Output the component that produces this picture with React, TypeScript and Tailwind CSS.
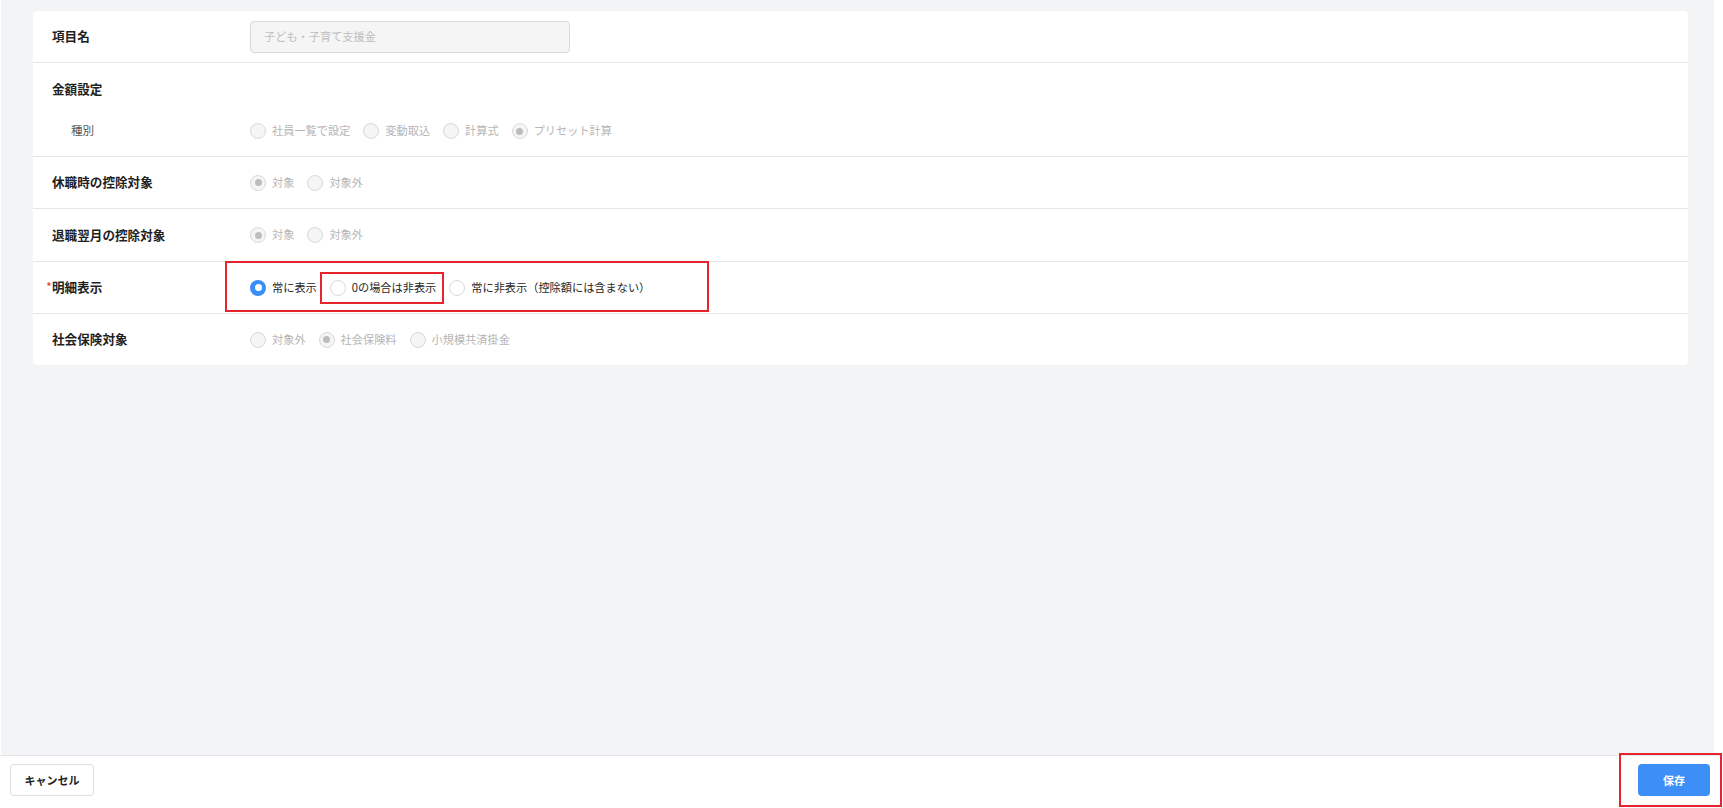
import React from "react";

type RadioProps = { label: string; checked?: boolean; disabled?: boolean };

function Radio({ label, checked = false, disabled = false }: RadioProps) {
  let circle: React.ReactNode;
  if (disabled) {
    circle = (
      <span className="w-4 h-4 rounded-full border border-[#d9d9d9] bg-[#f5f5f5] flex items-center justify-center shrink-0">
        {checked && <span className="w-[7px] h-[7px] rounded-full bg-[#bdbdbd]" />}
      </span>
    );
  } else if (checked) {
    circle = (
      <span className="w-4 h-4 rounded-full bg-[#3b8ef6] flex items-center justify-center shrink-0">
        <span className="w-[7px] h-[7px] rounded-full bg-white" />
      </span>
    );
  } else {
    circle = <span className="w-4 h-4 rounded-full border border-[#d9d9d9] bg-white shrink-0" />;
  }
  return (
    <label className="flex items-center mr-[13px]">
      {circle}
      <span
        className={
          disabled
            ? "ml-[6px] text-[11.2px] leading-none text-[#b5b5b5] whitespace-nowrap"
            : "ml-[6px] text-[11.2px] leading-none text-[#262626] whitespace-nowrap"
        }
      >
        {label}
      </span>
    </label>
  );
}

function Label({ children, required = false }: { children: React.ReactNode; required?: boolean }) {
  return (
    <div className="w-[217px] shrink-0 pl-[19px] flex items-center">
      {required && <span className="-ml-[6px] text-[12.6px] leading-none text-[#e53935]">*</span>}
      <span className="text-[12.6px] font-bold text-[#1f1f1f] leading-none">{children}</span>
    </div>
  );
}

export default function App() {
  return (
    <div className="relative w-[1723px] h-[808px] bg-white flex flex-col overflow-hidden font-['Noto_Sans_CJK_JP','Noto_Sans',sans-serif]">
      <div className="flex flex-1 min-h-0">
        <div className="ml-[1px] flex-1 bg-[#f3f4f6] pt-[11px] pl-[32px] pr-[26px]">
          <div className="bg-white rounded-[4px]">
            {/* 項目名 */}
            <div className="h-[52px] flex items-center border-b border-[#e3e6ea]">
              <Label>項目名</Label>
              <div className="w-[320px] h-[32px] rounded-[4px] border border-[#d9d9d9] bg-[#f5f5f5] flex items-center px-[13px]">
                <span className="text-[11.2px] text-[#bfbfbf] leading-none">子ども・子育て支援金</span>
              </div>
            </div>
            {/* 金額設定 */}
            <div className="h-[94px] flex flex-col border-b border-[#e3e6ea]">
              <div className="h-[53px] flex items-center">
                <Label>金額設定</Label>
              </div>
              <div className="h-[30px] flex items-center">
                <div className="w-[217px] shrink-0 pl-[38px] flex items-center">
                  <span className="text-[11.6px] text-[#595959] leading-none">種別</span>
                </div>
                <div className="flex items-center">
                  <Radio label="社員一覧で設定" disabled />
                  <Radio label="変動取込" disabled />
                  <Radio label="計算式" disabled />
                  <Radio label="プリセット計算" checked disabled />
                </div>
              </div>
            </div>
            {/* 休職時 */}
            <div className="h-[52px] flex items-center border-b border-[#e3e6ea]">
              <Label>休職時の控除対象</Label>
              <div className="flex items-center">
                <Radio label="対象" checked disabled />
                <Radio label="対象外" disabled />
              </div>
            </div>
            {/* 退職翌月 */}
            <div className="h-[53px] flex items-center border-b border-[#e3e6ea]">
              <Label>退職翌月の控除対象</Label>
              <div className="flex items-center">
                <Radio label="対象" checked disabled />
                <Radio label="対象外" disabled />
              </div>
            </div>
            {/* 明細表示 */}
            <div className="h-[52px] flex items-center border-b border-[#e3e6ea]">
              <Label required>明細表示</Label>
              <div className="flex items-center">
                <Radio label="常に表示" checked />
                <Radio label="0の場合は非表示" />
                <Radio label="常に非表示（控除額には含まない）" />
              </div>
            </div>
            {/* 社会保険対象 */}
            <div className="h-[51px] flex items-center">
              <Label>社会保険対象</Label>
              <div className="flex items-center">
                <Radio label="対象外" disabled />
                <Radio label="社会保険料" checked disabled />
                <Radio label="小規模共済掛金" disabled />
              </div>
            </div>
          </div>
        </div>
        <div className="w-[9px] bg-white shrink-0" />
      </div>
      {/* footer */}
      <div className="h-[53px] shrink-0 border-t border-[#e3e6ea] bg-white flex items-start justify-between pt-[8px] pl-[10px] pr-[13px]">
        <button className="w-[84px] h-[32px] rounded-[4px] border border-[#dcdfe3] bg-white text-[11px] font-bold text-[#1f1f1f]">
          キャンセル
        </button>
        <button className="w-[72px] h-[32px] rounded-[4px] bg-[#3d8ef7] text-[11px] font-bold text-white">
          保存
        </button>
      </div>

      {/* annotation boxes */}
      <div className="absolute left-[225px] top-[261px] w-[484px] h-[51px] border-2 border-[#e5242b] pointer-events-none" />
      <div className="absolute left-[320px] top-[272px] w-[124px] h-[32px] border-2 border-[#e5242b] pointer-events-none" />
      <div className="absolute left-[1619px] top-[753px] w-[103px] h-[54px] border-2 border-[#e5242b] pointer-events-none" />
    </div>
  );
}
